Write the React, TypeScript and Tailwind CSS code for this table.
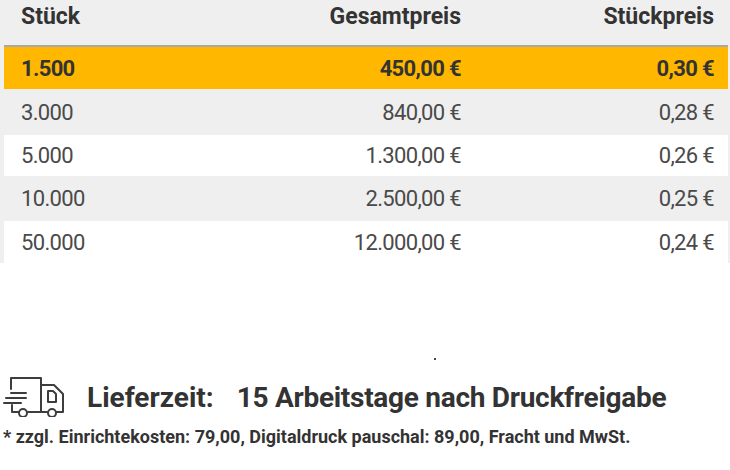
const rows = [
  { qty: "1.500", total: "450,00 €", unit: "0,30 €", tone: "active", h: "h-[42px]" },
  { qty: "3.000", total: "840,00 €", unit: "0,28 €", tone: "gray", h: "h-[46px]" },
  { qty: "5.000", total: "1.300,00 €", unit: "0,26 €", tone: "white", h: "h-[41px]" },
  { qty: "10.000", total: "2.500,00 €", unit: "0,25 €", tone: "gray", h: "h-[45px]" },
  { qty: "50.000", total: "12.000,00 €", unit: "0,24 €", tone: "white", h: "h-[42px]" },
];

const toneClass: Record<string, string> = {
  active: "bg-[#ffb700] font-bold text-[#333333]",
  gray: "bg-[#efefef] text-[#4a4a4a]",
  white: "bg-white text-[#4a4a4a]",
};

function TruckIcon() {
  return (
    <svg width="64" height="44" viewBox="0 0 64 44" fill="none" stroke="#3d3d3d" strokeWidth="2" strokeLinecap="round" strokeLinejoin="round">
      <path d="M10 16 V5 H40 V39" />
      <path d="M40 12 H53 L62 21 V39 H55" />
      <path d="M27 39 H46" />
      <path d="M11 32 V39 H18" />
      <path d="M47 18 H52 L55 21 V29 H47 Z" />
      <path d="M10 20 H25" />
      <path d="M5 25 H25" />
      <path d="M3 30 H20" />
      <circle cx="22" cy="40" r="4" />
      <circle cx="51" cy="40" r="4" />
    </svg>
  );
}

export default function App() {
  return (
    <div className="h-[470px] w-[730px] overflow-hidden bg-white font-['Roboto',sans-serif] text-[#333333]">
      <div className="bg-[#efefef] pl-[4px] pr-[2px]">
        <div className="grid h-[45px] grid-cols-[187px_253px_253px] items-center pb-[11px] pl-[17px] text-[23px] font-bold">
          <div>Stück</div>
          <div className="text-right">Gesamtpreis</div>
          <div className="text-right">Stückpreis</div>
        </div>
        <div className="h-[2px] bg-[#a8a8a8]" />
        {rows.map((r) => (
          <div
            key={r.qty}
            className={`grid grid-cols-[187px_253px_253px] items-center pl-[17px] text-[22px] tracking-[-0.03em] ${r.h} ${toneClass[r.tone]}`}
          >
            <div>{r.qty}</div>
            <div className="text-right">{r.total}</div>
            <div className="text-right">{r.unit}</div>
          </div>
        ))}
      </div>

      <div className="ml-[434px] mt-[95px] h-[2px] w-[2px] bg-[#444]" />

      <div className="mt-[11px] flex items-center">
        <div className="ml-[1px]">
          <TruckIcon />
        </div>
        <div className="ml-[22px] pt-[6px] text-[28px] font-bold">Lieferzeit:</div>
        <div className="ml-[23px] pt-[6px] text-[28px] font-bold tracking-[-0.01em]">
          15 Arbeitstage nach Druckfreigabe
        </div>
      </div>

      <div className="mt-[4px] pl-[3px] text-[18px] font-bold">
        * zzgl. Einrichtekosten: 79,00, Digitaldruck pauschal: 89,00, Fracht und MwSt.
      </div>
    </div>
  );
}
